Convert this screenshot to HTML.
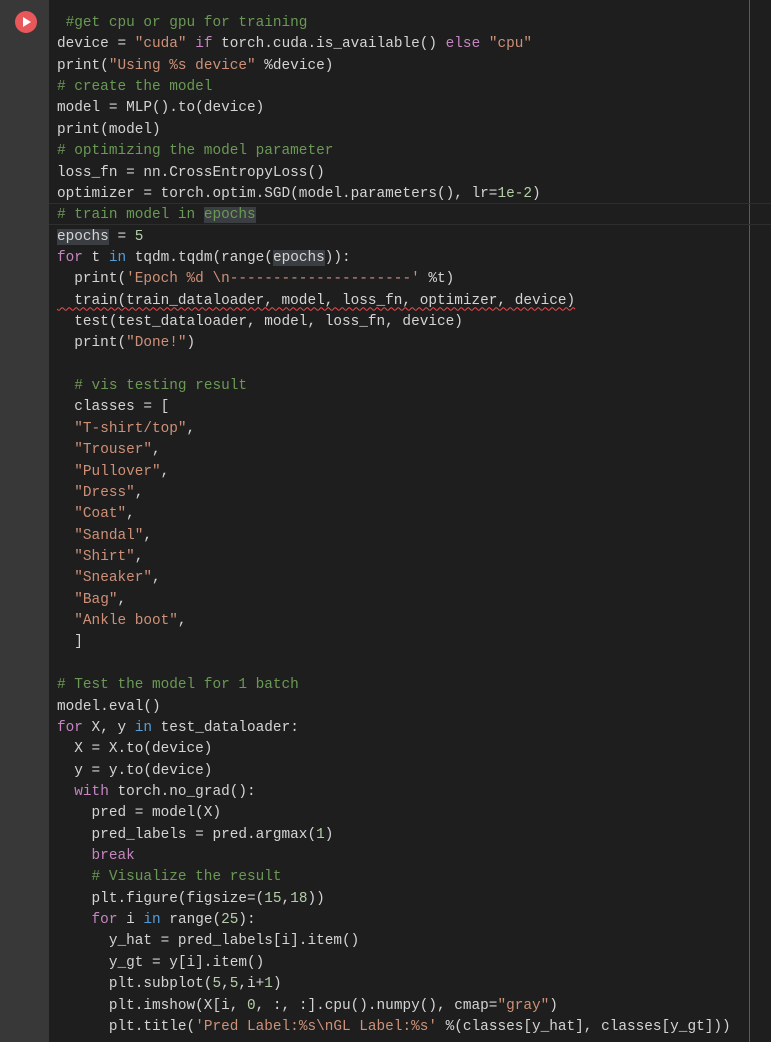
<!DOCTYPE html>
<html><head><meta charset="utf-8"><style>
html,body{margin:0;padding:0;background:#1e1e1e;width:771px;height:1042px;overflow:hidden}
.g{position:absolute;left:0;top:0;width:49px;height:1042px;background:#383838}
.play{position:absolute;left:15px;top:11px;width:22px;height:22px;border-radius:50%;background:#e8585a}
.play:after{content:"";position:absolute;left:8px;top:6px;border-left:8px solid #fff;border-top:5px solid transparent;border-bottom:5px solid transparent}
.vl{position:absolute;left:749px;top:0;width:1px;height:1042px;background:#5a5a5a}
.cur{position:absolute;left:49px;top:203px;width:722px;height:22px;border-top:1px solid #2e2e2e;border-bottom:1px solid #2e2e2e;box-sizing:border-box}
pre{position:absolute;left:57px;top:13px;margin:0;font-family:"Liberation Mono",monospace;font-size:14.4px;line-height:21.36px;color:#d4d4d4}
.c{color:#6a9955}.s{color:#ce9178}.k{color:#c586c0}.b{color:#569cd6}.n{color:#b5cea8}
.h{background:#3a3d41}
.w{text-decoration:underline wavy #f14c4c;text-decoration-thickness:1px;text-underline-offset:3px}
</style></head><body>
<div class="g"></div><div class="play"></div><div class="vl"></div><div class="cur"></div>
<pre><span class="c"> #get cpu or gpu for training</span>
device = <span class="s">"cuda"</span> <span class="k">if</span> torch.cuda.is_available() <span class="k">else</span> <span class="s">"cpu"</span>
print(<span class="s">"Using %s device"</span> %device)
<span class="c"># create the model</span>
model = MLP().to(device)
print(model)
<span class="c"># optimizing the model parameter</span>
loss_fn = nn.CrossEntropyLoss()
optimizer = torch.optim.SGD(model.parameters(), lr=<span class="n">1e-2</span>)
<span class="c"># train model in <span class="h">epochs</span></span>
<span class="h">epochs</span> = <span class="n">5</span>
<span class="k">for</span> t <span class="b">in</span> tqdm.tqdm(range(<span class="h">epochs</span>)):
  print(<span class="s">'Epoch %d \n---------------------'</span> %t)
<span class="w">  train(train_dataloader, model, loss_fn, optimizer, device)</span>
  test(test_dataloader, model, loss_fn, device)
  print(<span class="s">"Done!"</span>)

  <span class="c"># vis testing result</span>
  classes = [
  <span class="s">"T-shirt/top"</span>,
  <span class="s">"Trouser"</span>,
  <span class="s">"Pullover"</span>,
  <span class="s">"Dress"</span>,
  <span class="s">"Coat"</span>,
  <span class="s">"Sandal"</span>,
  <span class="s">"Shirt"</span>,
  <span class="s">"Sneaker"</span>,
  <span class="s">"Bag"</span>,
  <span class="s">"Ankle boot"</span>,
  ]

<span class="c"># Test the model for 1 batch</span>
model.eval()
<span class="k">for</span> X, y <span class="b">in</span> test_dataloader:
  X = X.to(device)
  y = y.to(device)
  <span class="k">with</span> torch.no_grad():
    pred = model(X)
    pred_labels = pred.argmax(<span class="n">1</span>)
    <span class="k">break</span>
    <span class="c"># Visualize the result</span>
    plt.figure(figsize=(<span class="n">15</span>,<span class="n">18</span>))
    <span class="k">for</span> i <span class="b">in</span> range(<span class="n">25</span>):
      y_hat = pred_labels[i].item()
      y_gt = y[i].item()
      plt.subplot(<span class="n">5</span>,<span class="n">5</span>,i+<span class="n">1</span>)
      plt.imshow(X[i, <span class="n">0</span>, :, :].cpu().numpy(), cmap=<span class="s">"gray"</span>)
      plt.title(<span class="s">'Pred Label:%s\nGL Label:%s'</span> %(classes[y_hat], classes[y_gt]))</pre>
</body></html>
